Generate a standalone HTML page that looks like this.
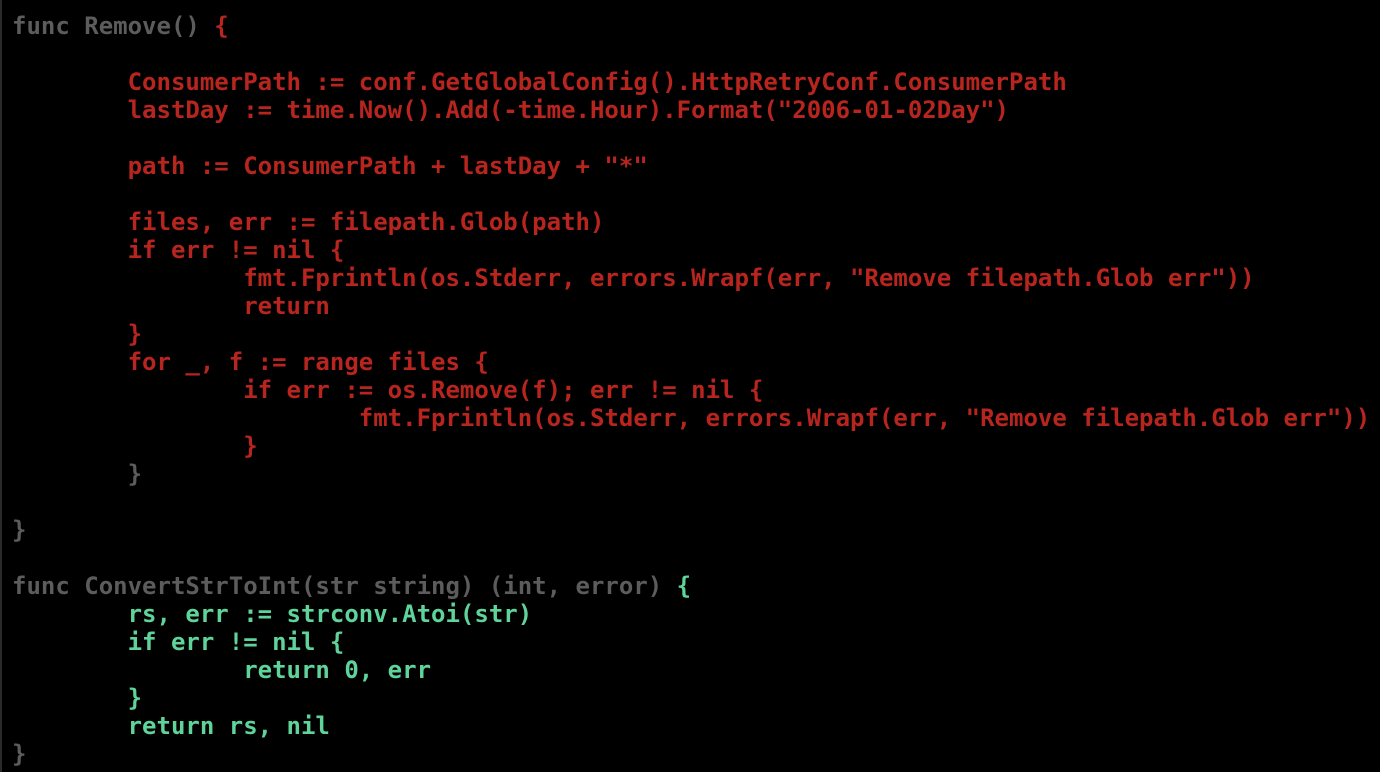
<!DOCTYPE html>
<html><head><style>
html,body{margin:0;padding:0;background:#000;width:1380px;height:772px;overflow:hidden}
pre{margin:0;position:absolute;left:12px;top:12px;font-family:"DejaVu Sans Mono","Liberation Mono",monospace;font-weight:bold;font-size:24px;line-height:28px;color:#b8251f;tab-size:8;white-space:pre}
.g{color:#5c5c5c}.n{color:#5fd39a}
.bar{position:absolute;left:0;top:0;width:2px;height:772px;background:#2a2a2a}
</style></head><body><div class="bar"></div><pre><span class="g">func Remove() </span>{

	ConsumerPath := conf.GetGlobalConfig().HttpRetryConf.ConsumerPath
	lastDay := time.Now().Add(-time.Hour).Format("2006-01-02Day")

	path := ConsumerPath + lastDay + "*"

	files, err := filepath.Glob(path)
	if err != nil {
		fmt.Fprintln(os.Stderr, errors.Wrapf(err, "Remove filepath.Glob err"))
		return
	}
	for _, f := range files {
		if err := os.Remove(f); err != nil {
			fmt.Fprintln(os.Stderr, errors.Wrapf(err, "Remove filepath.Glob err"))
		}
<span class="g">	}

}

func ConvertStrToInt(str string) (int, error) </span><span class="n">{
	rs, err := strconv.Atoi(str)
	if err != nil {
		return 0, err
	}
	return rs, nil</span>
<span class="g">}</span></pre></body></html>
